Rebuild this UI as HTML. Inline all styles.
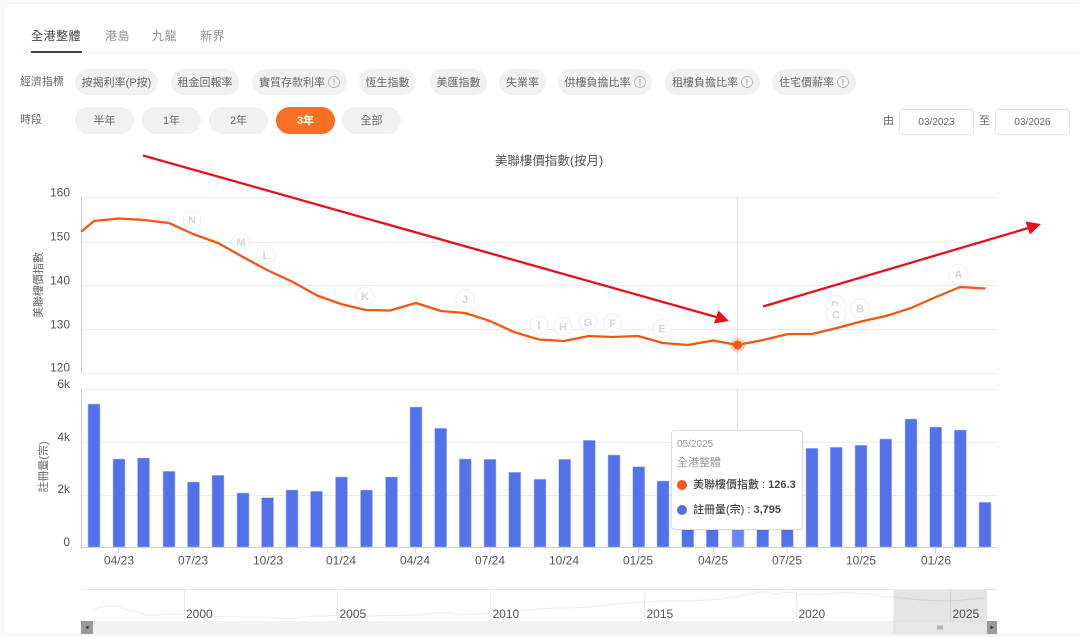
<!DOCTYPE html>
<html lang="zh-Hant">
<head>
<meta charset="utf-8">
<title>美聯樓價指數</title>
<style>
html,body{margin:0;padding:0;width:1080px;height:637px;overflow:hidden;background:#fbfbfb}
*{box-sizing:border-box}
#root{position:absolute;left:0;top:0;width:1080px;height:637px;font-family:"Liberation Sans","Noto Sans CJK TC",sans-serif;filter:blur(.35px)}
#card{position:absolute;left:4px;top:4px;width:1076px;height:630px;background:#fff;border-radius:3px 0 0 3px;box-shadow:0 0 3px rgba(0,0,0,.07)}
.t{position:absolute;white-space:nowrap;line-height:16px}
.tab{top:27.5px;font-size:12px;color:#8f8f8f;letter-spacing:.5px}
.chip{position:absolute;top:69px;height:26px;border-radius:13px;background:#f1f1f1;color:#666;font-size:11px;display:flex;align-items:center;justify-content:center;white-space:nowrap;padding-bottom:1px}
.chip svg{margin-left:3px;flex:none}
.p{top:107px;height:27px;border-radius:14px}
.on{background:#fb6f24;color:#fff;font-weight:bold}
.date{position:absolute;top:109px;width:75px;height:26px;border:1px solid #e2e2e2;border-radius:4px;background:#fff;color:#666;font-size:10px;display:flex;align-items:center;justify-content:center}
#chart{position:absolute;left:0;top:0}
#tip{position:absolute;left:670.5px;top:429.5px;width:132px;height:100px;background:#fff;border:1px solid #dedede;border-radius:4px;box-shadow:0 1px 3px rgba(0,0,0,.08)}
.dot{position:absolute;width:10px;height:10px;border-radius:50%}
</style>
</head>
<body>
<div id="root">
<div id="card"></div>

<div class="t tab" style="left:31px;color:#444">全港整體</div>
<div class="t tab" style="left:105px">港島</div>
<div class="t tab" style="left:152px">九龍</div>
<div class="t tab" style="left:200px">新界</div>
<div style="position:absolute;left:20px;top:52px;width:1060px;height:1px;background:#f3f3f3"></div>
<div style="position:absolute;left:31px;top:51px;width:51px;height:2px;background:#444"></div>

<div class="t" style="left:20px;top:74px;font-size:11px;color:#666">經濟指標</div>
<div class="t" style="left:20px;top:112px;font-size:11px;color:#666">時段</div>

<div class="chip" style="left:75px;width:83px">按揭利率(P按)</div>
<div class="chip" style="left:171px;width:68px">租金回報率</div>
<div class="chip" style="left:252px;width:95px">實質存款利率<svg width="12" height="12" viewBox="0 0 12 12"><circle cx="6" cy="6" r="5.5" fill="none" stroke="#aaa" stroke-width=".7"/><path d="M6 2.8V7.4M6 8.5V9.5" stroke="#999" stroke-width=".9"/></svg></div>
<div class="chip" style="left:359px;width:57px">恆生指數</div>
<div class="chip" style="left:430px;width:57px">美匯指數</div>
<div class="chip" style="left:499px;width:47px">失業率</div>
<div class="chip" style="left:558px;width:94px">供樓負擔比率<svg width="12" height="12" viewBox="0 0 12 12"><circle cx="6" cy="6" r="5.5" fill="none" stroke="#aaa" stroke-width=".7"/><path d="M6 2.8V7.4M6 8.5V9.5" stroke="#999" stroke-width=".9"/></svg></div>
<div class="chip" style="left:665px;width:95px">租樓負擔比率<svg width="12" height="12" viewBox="0 0 12 12"><circle cx="6" cy="6" r="5.5" fill="none" stroke="#aaa" stroke-width=".7"/><path d="M6 2.8V7.4M6 8.5V9.5" stroke="#999" stroke-width=".9"/></svg></div>
<div class="chip" style="left:772px;width:84px">住宅價薪率<svg width="12" height="12" viewBox="0 0 12 12"><circle cx="6" cy="6" r="5.5" fill="none" stroke="#aaa" stroke-width=".7"/><path d="M6 2.8V7.4M6 8.5V9.5" stroke="#999" stroke-width=".9"/></svg></div>

<div class="chip p" style="left:75px;width:59px">半年</div>
<div class="chip p" style="left:142px;width:59px">1年</div>
<div class="chip p" style="left:209px;width:59px">2年</div>
<div class="chip p on" style="left:276px;width:59px">3年</div>
<div class="chip p" style="left:342px;width:59px">全部</div>

<div class="t" style="left:883px;top:113px;font-size:11px;color:#666">由</div>
<div class="date" style="left:899px">03/2023</div>
<div class="t" style="left:979px;top:113px;font-size:11px;color:#666">至</div>
<div class="date" style="left:995px">03/2026</div>

<svg id="chart" width="1080" height="637" viewBox="0 0 1080 637" font-family="'Liberation Sans','Noto Sans CJK TC',sans-serif">
<text x="549" y="165" text-anchor="middle" font-size="12.5" fill="#555">美聯樓價指數(按月)</text>

<g stroke="#ececec" stroke-width="1">
<path d="M81 197.5H997M81 242.5H997M81 285.5H997M81 329.5H997M81 373.5H997"/>
<path d="M81 389.5H997M81 442.5H997M81 495.5H997"/>
</g>
<path d="M81.5 197V373.5M81.5 389V547" stroke="#cfcfcf" fill="none"/>
<path d="M81 547.5H997" stroke="#cfcfcf"/>
<path d="M737.5 197V373M737.5 389V547" stroke="#e4e4e4" stroke-width="1.3" fill="none"/>

<g font-size="12" fill="#555" text-anchor="end">
<text x="70" y="196.5">160</text><text x="70" y="240.5">150</text><text x="70" y="284.5">140</text><text x="70" y="328.5">130</text><text x="70" y="371.5">120</text>
<text x="70" y="388">6k</text><text x="70" y="441">4k</text><text x="70" y="493">2k</text><text x="70" y="546">0</text>
</g>
<text transform="translate(42 285) rotate(-90)" text-anchor="middle" font-size="11" fill="#666">美聯樓價指數</text>
<text transform="translate(47 467) rotate(-90)" text-anchor="middle" font-size="11" fill="#666">註冊量(宗)</text>

<g fill="#5271ea" stroke="#b9c6f7" stroke-width=".5">
<rect x="88" y="404" width="12" height="143"/><rect x="113" y="459" width="12" height="88"/><rect x="137.5" y="458" width="12" height="89"/><rect x="163" y="471.3" width="12" height="75.7"/><rect x="187.5" y="482" width="12" height="65"/><rect x="212" y="475.3" width="12" height="71.7"/><rect x="237" y="493" width="12" height="54"/><rect x="261.5" y="497.7" width="12" height="49.3"/><rect x="286" y="490" width="12" height="57"/><rect x="310.5" y="491.3" width="12" height="55.7"/><rect x="335.5" y="477" width="12" height="70"/><rect x="360.5" y="490" width="12" height="57"/><rect x="385.5" y="477" width="12" height="70"/>
<rect x="410" y="407" width="12" height="140"/><rect x="434.7" y="428.3" width="12" height="118.7"/><rect x="459.3" y="459" width="12" height="88"/><rect x="484" y="459.3" width="12" height="87.7"/><rect x="508.7" y="472.3" width="12" height="74.7"/><rect x="534" y="479.3" width="12" height="67.7"/><rect x="558.7" y="459.3" width="12" height="87.7"/><rect x="583.3" y="440.3" width="12" height="106.7"/><rect x="608" y="455" width="12" height="92"/><rect x="632.7" y="466.7" width="12" height="80.3"/><rect x="657" y="481" width="12" height="66"/>
<rect x="681.7" y="500" width="12" height="47"/><rect x="706.3" y="500" width="12" height="47"/><rect x="732" y="500" width="12" height="47" fill="#6b84ff"/><rect x="756.7" y="500" width="12" height="47"/><rect x="781.3" y="500" width="12" height="47"/>
<rect x="806" y="448.3" width="12" height="98.7"/><rect x="830.3" y="447.3" width="12" height="99.7"/><rect x="855" y="445.3" width="12" height="101.7"/><rect x="879.7" y="439" width="12" height="108"/><rect x="905" y="419" width="12" height="128"/><rect x="929.7" y="427" width="12" height="120"/><rect x="954.3" y="430" width="12" height="117"/><rect x="979" y="502.3" width="12" height="44.7"/>
</g>

<path d="M118.5 548v5M193 548v5M267.5 548v5M341 548v5M415.5 548v5M490 548v5M564 548v5M638.5 548v5M713 548v5M787 548v5M861.5 548v5M935.5 548v5" stroke="#ccd6fa" fill="none"/>
<g font-size="12" fill="#555" text-anchor="middle">
<text x="119" y="564.5">04/23</text><text x="193" y="564.5">07/23</text><text x="268" y="564.5">10/23</text><text x="341" y="564.5">01/24</text><text x="415" y="564.5">04/24</text><text x="490" y="564.5">07/24</text><text x="564" y="564.5">10/24</text><text x="638" y="564.5">01/25</text><text x="713" y="564.5">04/25</text><text x="787" y="564.5">07/25</text><text x="861" y="564.5">10/25</text><text x="936" y="564.5">01/26</text>
</g>

<path d="M81.5 231.5L94 221L119 218.5L144 220L169 223L193 234L218 243L243 257L267 270L293 282L317 295.5L341 304L366 310L390 310.5L416 303L441 311L465 313L490 321L514 332L539 339.5L564 341L589 336L613 337L638 336L663 343L688 345L713 340.5L737.5 345L763 340L788 334L812 334L837 328L861 321.5L886 316L911 308L936 297L960 287L985.5 288.5" fill="none" stroke="#f55510" stroke-width="2.3" stroke-linejoin="round"/>

<g fill="#fff" stroke="#e8f1fb" stroke-width="1">
<circle cx="192" cy="219.5" r="9"/><circle cx="241" cy="242" r="9"/><circle cx="266" cy="255" r="9"/><circle cx="365" cy="296" r="9"/><circle cx="465" cy="299" r="9"/><circle cx="539" cy="325" r="9"/><circle cx="563" cy="326.5" r="9"/><circle cx="588" cy="322" r="9"/><circle cx="612.5" cy="323" r="9"/><circle cx="662" cy="328.5" r="9"/>
<circle cx="835.5" cy="305" r="9.5"/>
</g>
<g font-size="11" font-weight="bold" fill="#d5d5d5" text-anchor="middle">
<text x="192" y="223.5">N</text><text x="241" y="246">M</text><text x="266" y="259">L</text><text x="365" y="300">K</text><text x="465" y="303">J</text><text x="539" y="329">I</text><text x="563" y="330.5">H</text><text x="588" y="326">G</text><text x="612.5" y="327">F</text><text x="662" y="332.5">E</text><text x="835" y="309">D</text>
</g>
<circle cx="836" cy="314.5" r="9.5" fill="#fff" stroke="#e8f1fb"/>
<circle cx="860" cy="308.5" r="9.5" fill="#fff" stroke="#e8f1fb"/>
<circle cx="958.5" cy="274" r="9.5" fill="#fff" stroke="#e8f1fb"/>
<g font-size="11" font-weight="bold" fill="#d5d5d5" text-anchor="middle">
<text x="836" y="318.5">C</text><text x="860" y="312.5">B</text><text x="958.5" y="278">A</text>
</g>

<circle cx="737.5" cy="345" r="7.5" fill="#f75d1e" fill-opacity=".25"/>
<circle cx="737.5" cy="345" r="4.5" fill="#f55510"/>

<path d="M143 155.5L718 317.5" stroke="#ea0f1a" stroke-width="2.3" fill="none"/>
<path d="M729 321L714 323.5L718.5 310.5Z" fill="#ea0f1a"/>
<path d="M763 306.5L1030 227.5" stroke="#ea0f1a" stroke-width="2.3" fill="none"/>
<path d="M1041 224L1030 234.5L1025.5 221.5Z" fill="#ea0f1a"/>

<path d="M81 589.5H997" stroke="#e6e6e6"/>
<path d="M184.5 590V621M337.5 590V621M490.5 590V621M644.5 590V621M796.5 590V621M950.5 590V621" stroke="#ececec" fill="none"/>
<path d="M93 610L100 607L110 606L118 606L125 610L135 611L145 615L160 615L175 614L190 615L220 616.5L260 617L290 618.5L310 616.5L337 615.5L370 616L420 615L435 613L450 612.5L460 615L480 614L500 612L528 610L550 608L570 608L590 607L620 603.5L660 601L690 601L722 599L750 594L760 592L765 592L775 594L790 592L800 594L820 594.5L845 592.5L870 594L885 597L893 597L920 600L950 601L985 598" fill="none" stroke="#ededed" stroke-width="1"/>
<g font-size="12" fill="#555">
<text x="186" y="618">2000</text><text x="339.5" y="618">2005</text><text x="492.5" y="618">2010</text><text x="646.5" y="618">2015</text><text x="798.5" y="618">2020</text><text x="952.5" y="618">2025</text>
</g>
<rect x="893.5" y="590" width="93.5" height="31" fill="#000" fill-opacity=".1"/>
<rect x="81" y="621" width="916" height="13" fill="#f2f2f2"/>
<rect x="81" y="621" width="12" height="13" fill="#999"/>
<path d="M88.5 625.5V629.5L85.5 627.5Z" fill="#333"/>
<rect x="894" y="621.5" width="93" height="12.5" fill="#e6e6e6" stroke="#d8d8d8" stroke-width=".6"/>
<path d="M938 625.5v4M940 625.5v4M942 625.5v4" stroke="#888" fill="none"/>
<rect x="987" y="621" width="10" height="13" fill="#999"/>
<path d="M990.5 625.5V629.5L993.5 627.5Z" fill="#333"/>
</svg>

<div id="tip"></div>
<div class="t" style="left:677px;top:437px;font-size:10px;color:#999">05/2025</div>
<div class="t" style="left:677px;top:455px;font-size:11px;color:#999">全港整體</div>
<div class="dot" style="left:677px;top:480px;background:#f7581d"></div>
<div class="t" style="left:693px;top:477px;font-size:11px;color:#444;font-weight:500">美聯樓價指數 : <b>126.3</b></div>
<div class="dot" style="left:677px;top:505px;background:#5271ea"></div>
<div class="t" style="left:693px;top:502px;font-size:11px;color:#444;font-weight:500">註冊量(宗) : <b>3,795</b></div>
</div>
</body>
</html>
